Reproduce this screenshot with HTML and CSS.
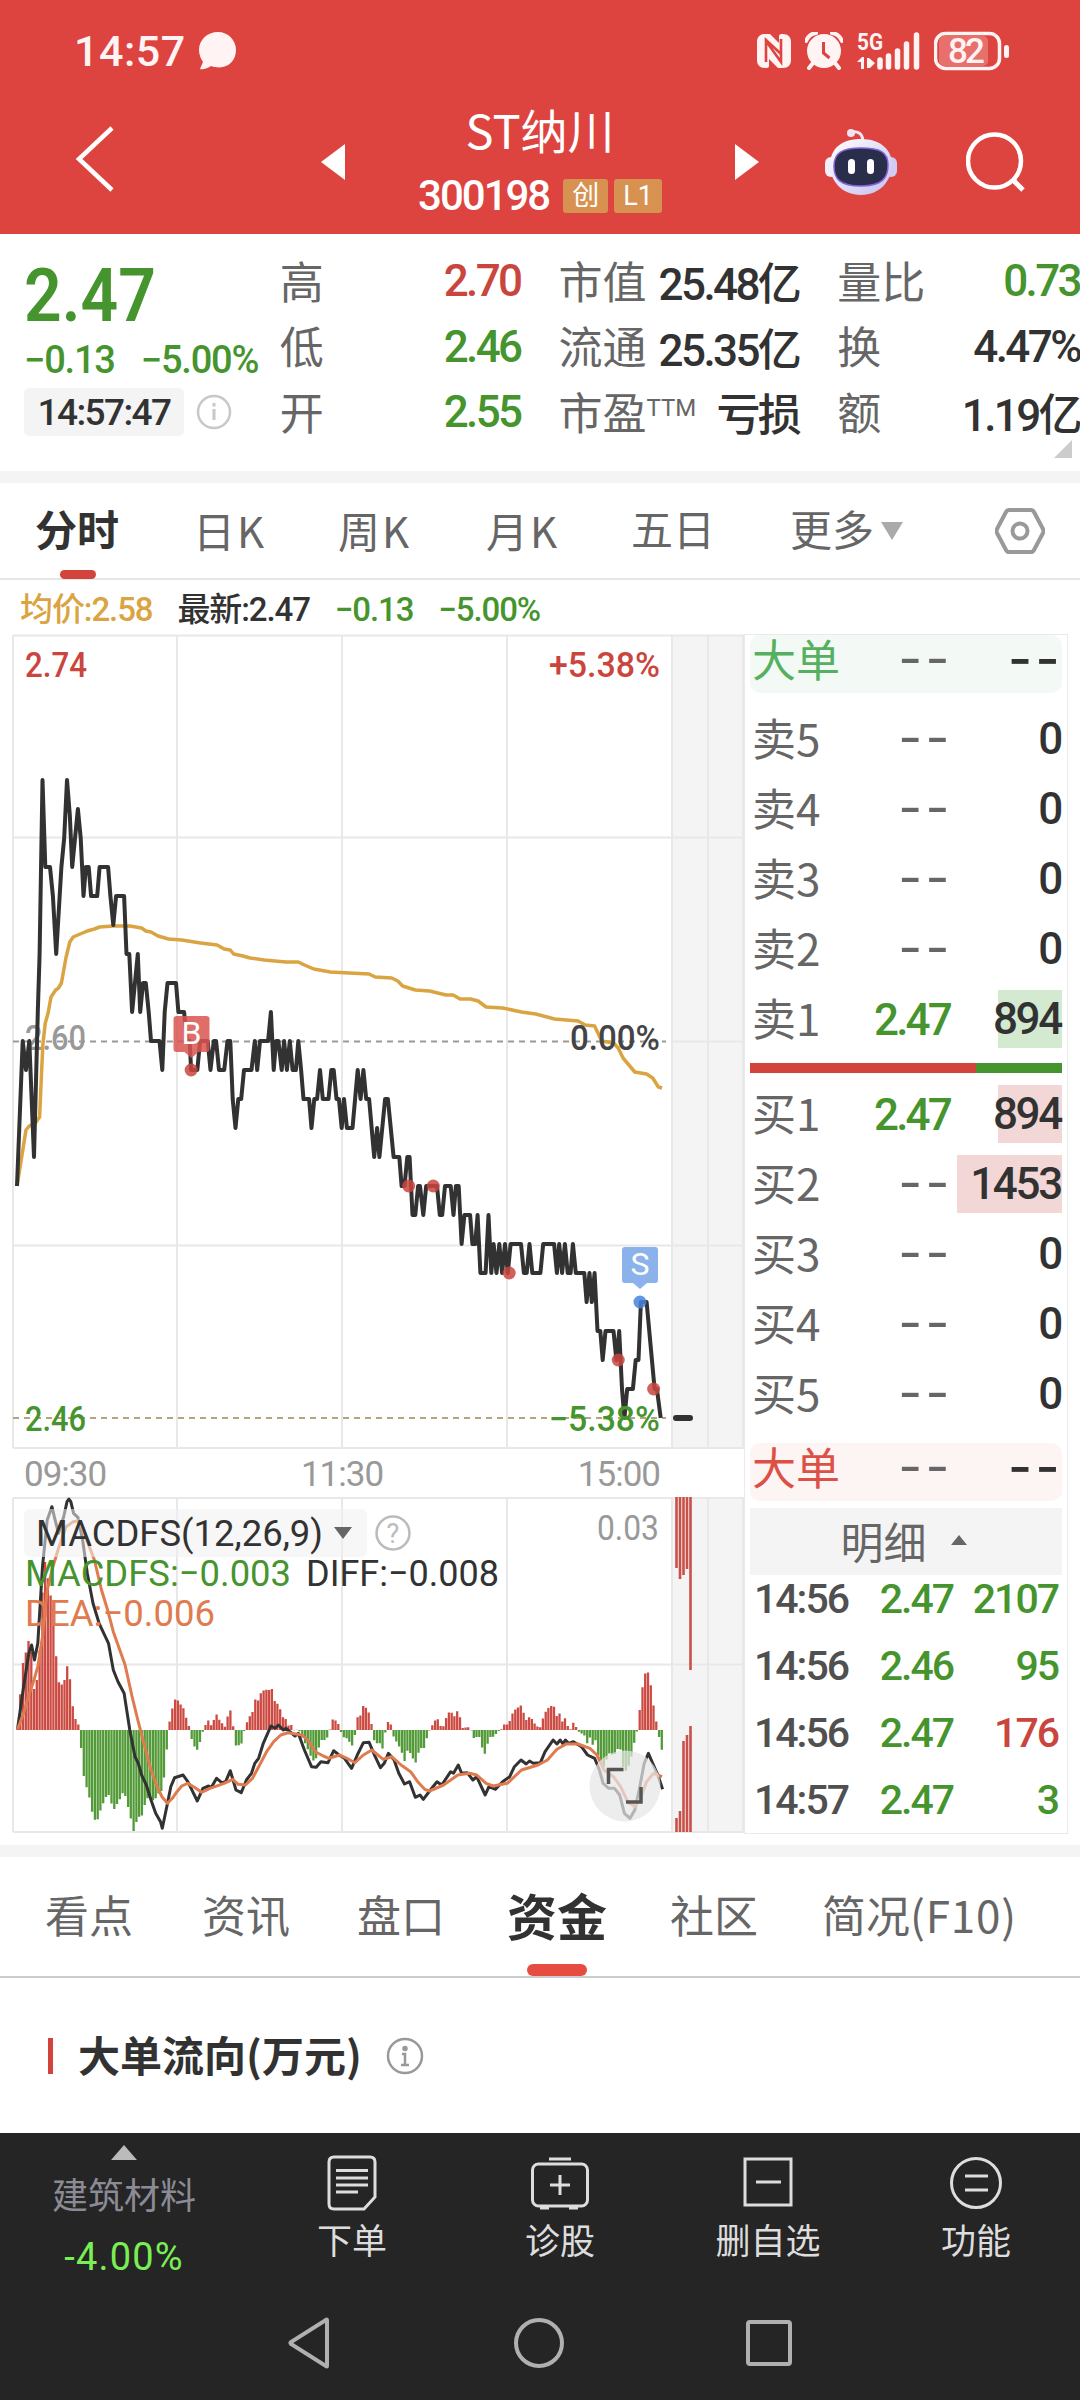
FILE: index.html
```html
<!DOCTYPE html>
<html lang="zh-CN">

<head>
  <meta charset="UTF-8" />
  <title>ST纳川 300198</title>
  <meta name="viewport" content="width=device-width, initial-scale=1.0" />
  <link rel="stylesheet" href="styles.css">
</head>

<body>
  <header>
    <div class="status-bar">
      <span class="clock">14:57</span>
      <svg class="bubble" width="39" height="40" viewBox="0 0 39 40"><path d="M20 1C9 1 1 9 1 19c0 5 2 9 4 12l-3 7c3 1 8-1 11-3 15 5 25-4 25-16C38 9 30 1 20 1z" fill="#fff3f3"/></svg>
      <div class="status-icons">
        <svg width="34" height="36" viewBox="0 0 34 36">
          <path d="M8 1h5l9 9V3c0-1 1-2 2-2h2c5 0 8 3 8 8v18c0 5-3 8-8 8h-5l-9-9v7c0 1-1 2-2 2H8c-5 0-8-3-8-8V9c0-5 3-8 8-8z" fill="#fff3f3"/>
          <path d="M9 29V7l15 14V6M9 8l15 21V14" fill="none" stroke="#dd443f" stroke-width="2.6"/>
        </svg>
        <svg width="38" height="38" viewBox="0 0 38 38">
          <path d="M1 9Q4 2 11 1M37 9Q34 2 27 1M8 31l-4 5M30 31l4 5" fill="none" stroke="#fff3f3" stroke-width="4" stroke-linecap="round"/>
          <circle cx="19" cy="19" r="17" fill="#fff3f3"/>
          <path d="M18.500 10v11l6 5" fill="none" stroke="#dd443f" stroke-width="3"/>
        </svg>
        <svg width="63" height="56" viewBox="0 -8 63 56">
          <text class="net" x="0" y="19" textLength="26" lengthAdjust="spacingAndGlyphs">5G</text>
          <path d="M0 31l5-5h2v12H4v-7zM10 27h2l6 5-5 5h-3z" fill="#fff3f3"/>
          <path d="M23 29v7M31.500 25v11M40.500 20v16M49.500 13v23M59.500 4v32" stroke="#fff3f3" stroke-width="5.500" stroke-linecap="round"/>
        </svg>
        <svg width="76" height="40" viewBox="0 0 76 40">
          <rect x="5" y="5" width="49" height="30" rx="5" fill="#e8706c"/>
          <rect x="1.500" y="2.500" width="64" height="35" rx="10" fill="none" stroke="#fff3f3" stroke-width="3.500"/>
          <rect x="70" y="14" width="5" height="13" rx="2.500" fill="#fff3f3"/>
          <text class="battery" x="14" y="32" textLength="37">82</text>
        </svg>
      </div>
    </div>

    <div class="title-bar">
      <svg class="back" width="40" height="66" viewBox="0 0 40 66"><path d="M37 2L4 33l33 31" fill="none" stroke="#fff" stroke-width="4.500"/></svg>
      <svg width="24" height="36" viewBox="0 0 24 36"><path d="M24 0v36L0 18z" fill="#fff"/></svg>
      <div class="stock">
        <h1>ST纳川</h1>
        <div class="code"><span>300198</span><em>创</em><em>L1</em></div>
      </div>
      <svg width="24" height="36" viewBox="0 0 24 36"><path d="M0 0v36l24-18z" fill="#fff"/></svg>
      <svg class="robot" width="72" height="68" viewBox="0 0 72 68">
        <defs>
          <linearGradient id="shell" x1="0" y1="0" x2="1" y2="1"><stop offset="0" stop-color="#fff"/><stop offset="1" stop-color="#c4bff0"/></linearGradient>
        </defs>
        <path d="M26 4q11-2 12 9" fill="none" stroke="#f3e6f2" stroke-width="3"/>
        <circle cx="26" cy="5" r="4" fill="#efe4f2"/>
        <rect x="0" y="29" width="12" height="20" rx="6" fill="#f3effa"/>
        <rect x="60" y="29" width="12" height="20" rx="6" fill="#d0ccf4"/>
        <path d="M36 11c20 0 31 11 31 26S55 67 36 67 5 53 5 37 16 11 36 11z" fill="url(#shell)"/>
        <path d="M36 20c19 0 27 4 27 17S57 58 36 58 9 51 9 38s8-18 27-18z" fill="#292e4b" stroke="#8461d9" stroke-width="1.500"/>
        <rect x="23" y="31" width="7" height="15" rx="3.500" fill="#fff"/>
        <rect x="42" y="31" width="7" height="15" rx="3.500" fill="#fff"/>
      </svg>
      <svg class="search" width="60" height="60" viewBox="0 0 60 60"><circle cx="28.500" cy="29" r="26.500" fill="none" stroke="#fff" stroke-width="4.500"/><path d="M46 47l11 11" stroke="#fff" stroke-width="5"/></svg>
    </div>
  </header>

  <section class="quote">
    <div class="quote-price">
      <div class="last">2.47</div>
      <div class="change"><span>−0.13</span><span>−5.00%</span></div>
      <div class="time">
        <span class="chip">14:57:47</span>
        <svg width="36" height="36" viewBox="0 0 36 36" fill="none" stroke="#c8c8c8" stroke-width="2.500"><circle cx="18" cy="18" r="16"/><path d="M18 15v11M18 9v3.500" stroke-width="3"/></svg>
      </div>
    </div>
    <dl>
      <div><dt>高</dt><dd class="red">2.70</dd></div>
      <div><dt>低</dt><dd class="green">2.46</dd></div>
      <div><dt>开</dt><dd class="green">2.55</dd></div>
    </dl>
    <dl>
      <div><dt>市值</dt><dd>25.48亿</dd></div>
      <div><dt>流通</dt><dd>25.35亿</dd></div>
      <div><dt>市盈<sup>TTM</sup></dt><dd>亏损</dd></div>
    </dl>
    <dl>
      <div><dt>量比</dt><dd class="green">0.73</dd></div>
      <div><dt>换</dt><dd>4.47%</dd></div>
      <div><dt>额</dt><dd>1.19亿</dd></div>
    </dl>
    <i class="corner"></i>
  </section>

  <nav class="period-tabs">
    <a class="active">分时</a>
    <a>日<b>K</b></a>
    <a>周<b>K</b></a>
    <a>月<b>K</b></a>
    <a>五日</a>
    <a>更多<i class="caret"></i></a>
    <svg width="50" height="46" viewBox="0 0 50 46" fill="none" stroke="#999" stroke-width="4"><path d="M14 2h22q2 0 3 2l9 17q1 2 0 4l-9 17q-1 2-3 2H14q-2 0-3-2L2 25q-1-2 0-4l9-17q1-2 3-2z"/><circle cx="25" cy="23" r="7.500"/></svg>
  </nav>

  <div class="legend">
    <span class="gold">均价:2.58</span>
    <span>最新:2.47</span>
    <span class="green">−0.13</span>
    <span class="green">−5.00%</span>
  </div>

  <main>
    <div class="charts">
      <svg id="priceChart" width="744" height="816" viewBox="0 0 744 816"></svg>
      <div class="time-axis"><span>09:30</span><span>11:30</span><span>15:00</span></div>
      <svg id="macdChart" width="744" height="337" viewBox="0 0 744 337"></svg>
    </div>

    <aside class="book">
      <div class="row big sell"><span>大单</span><span class="dash">--</span><span class="dash dark">--</span></div>
      <div class="levels">
        <div class="row"><span>卖5</span><span class="dash">--</span><span class="qty">0</span></div>
        <div class="row"><span>卖4</span><span class="dash">--</span><span class="qty">0</span></div>
        <div class="row"><span>卖3</span><span class="dash">--</span><span class="qty">0</span></div>
        <div class="row"><span>卖2</span><span class="dash">--</span><span class="qty">0</span></div>
        <div class="row"><span>卖1</span><span class="price">2.47</span><span class="qty"><i class="depth ask" style="width:64px"></i>894</span></div>
      </div>
      <div class="ratio"><i style="width:72.4%"></i></div>
      <div class="levels">
        <div class="row"><span>买1</span><span class="price">2.47</span><span class="qty"><i class="depth bid" style="width:64px"></i>894</span></div>
        <div class="row"><span>买2</span><span class="dash">--</span><span class="qty"><i class="depth bid" style="width:105px"></i>1453</span></div>
        <div class="row"><span>买3</span><span class="dash">--</span><span class="qty">0</span></div>
        <div class="row"><span>买4</span><span class="dash">--</span><span class="qty">0</span></div>
        <div class="row"><span>买5</span><span class="dash">--</span><span class="qty">0</span></div>
      </div>
      <div class="row big buy"><span>大单</span><span class="dash">--</span><span class="dash dark">--</span></div>
      <div class="detail-head">明细<i></i></div>
      <div class="ticks">
        <div class="tick"><span>14:56</span><span class="green">2.47</span><span class="green">2107</span></div>
        <div class="tick"><span>14:56</span><span class="green">2.46</span><span class="green">95</span></div>
        <div class="tick"><span>14:56</span><span class="green">2.47</span><span class="red">176</span></div>
        <div class="tick"><span>14:57</span><span class="green">2.47</span><span class="green">3</span></div>
      </div>
    </aside>
  </main>

  <nav class="info-tabs">
    <a>看点</a>
    <a>资讯</a>
    <a>盘口</a>
    <a class="active">资金</a>
    <a>社区</a>
    <a>简况<b>(F10)</b></a>
  </nav>

  <section class="flow">
    <h2>大单流向(万元)</h2>
    <svg width="38" height="38" viewBox="0 0 38 38" fill="none" stroke="#999" stroke-width="2.500"><circle cx="19" cy="19" r="17"/><path d="M16 17h3v11M15 28h8"/><circle cx="19" cy="11.500" r="1.500" fill="#999"/></svg>
  </section>

  <footer>
    <div class="toolbar">
      <div class="sector">
        <i></i>
        <span>建筑材料</span>
        <strong>-4.00%</strong>
      </div>
      <a>
        <svg width="50" height="56" viewBox="0 0 50 56"><path d="M7 2h36q5 0 5 5v35L37 54H7q-5 0-5-5V7q0-5 5-5zM9 15.500h32M9 23h32M9 30h32M9 37h22"/></svg>
        <span>下单</span>
      </a>
      <a>
        <svg width="58" height="56" viewBox="0 0 58 56"><rect x="1.500" y="9" width="55" height="42" rx="6"/><path d="M18 4h22M29 20v20M19 30h20M9 53h9M38 53h9"/></svg>
        <span>诊股</span>
      </a>
      <a>
        <svg width="50" height="56" viewBox="0 0 50 56"><rect x="2" y="4" width="46" height="46"/><path d="M13 27h25"/></svg>
        <span>删自选</span>
      </a>
      <a>
        <svg width="52" height="56" viewBox="0 0 52 56"><circle cx="26" cy="28" r="24.500"/><path d="M15 21h23M15 35h23"/></svg>
        <span>功能</span>
      </a>
    </div>
    <div class="system-nav">
      <svg width="46" height="52" viewBox="0 0 46 52"><path d="M40 3v46q0 1-1 0L4 27q-1-1 0-2L39 3q1-1 1 0z"/></svg>
      <svg width="52" height="52" viewBox="0 0 52 52"><circle cx="26" cy="26" r="23"/></svg>
      <svg width="48" height="48" viewBox="0 0 48 48"><rect x="3" y="3" width="42" height="42" rx="2"/></svg>
    </div>
  </footer>

  <script src="charts.js"></script>
</body>

</html>
```

FILE: styles.css
```css
* {
  box-sizing: border-box;
  margin: 0;
  padding: 0;
}

body {
  width: 1080px;
  height: 2400px;
  overflow: hidden;
  font-family: Roboto, "Noto Sans CJK SC", sans-serif;
  background: #fff;
  color: #323232;
  white-space: nowrap;
}

svg {
  display: block;
  flex: none;
}

i, em {
  font-style: normal;
}

.green { color: #46942e; }
.red { color: #c9453d; }
.gold { color: #d9a441; }

/* header */

header {
  height: 234px;
  background: #dd443f;
  color: #fff;
}

.status-bar {
  height: 102px;
  padding: 0 70px 0 74px;
  display: flex;
  align-items: center;
}

.clock {
  width: 124px;
  font-size: 43px;
  font-weight: 500;
  letter-spacing: 0.5px;
  color: #fff3f3;
}

.status-icons {
  margin-left: auto;
  display: flex;
  align-items: center;
  gap: 14px;
}

.net {
  font-size: 24px;
  font-weight: 700;
  fill: #fff3f3;
}

.battery {
  font-size: 35px;
  font-weight: 500;
  fill: #fff3f3;
}

.title-bar {
  height: 132px;
  display: grid;
  grid-template-columns: 321px 24px 390px 24px 66px 72px 69px 60px;
  align-items: center;
  padding-bottom: 12px;
}

.back {
  margin: -6px 0 0 75px;
}

.robot {
  grid-column: 6;
}

.search {
  grid-column: 8;
}

.stock {
  height: 120px;
  display: flex;
  flex-direction: column;
  align-items: center;
}

.stock h1 {
  height: 60px;
  line-height: 54px;
  font-size: 47px;
  font-weight: 400;
  font-family: "Noto Sans CJK SC", sans-serif;
}

.code {
  height: 78px;
  display: flex;
  align-items: center;
  gap: 6px;
}

.code span {
  padding-top: 12px;
  font-size: 42px;
  font-weight: 500;
  letter-spacing: -2px;
  margin-right: 8px;
}

.code em {
  height: 34px;
  line-height: 34px;
  margin-top: 13px;
  padding: 0 9px;
  border-radius: 3px;
  background: #d79252;
  font-size: 27px;
}

/* quote block */

.quote {
  position: relative;
  height: 249px;
  padding: 13px 0 0 24px;
  display: flex;
  border-bottom: 12px solid #f4f4f4;
}

.quote-price {
  width: 256px;
  color: #46942e;
}

.last {
  height: 92px;
  line-height: 96px;
  font-size: 75px;
  font-weight: 600;
  transform: scaleX(0.88);
  transform-origin: left;
}

.change {
  height: 40px;
  line-height: 42px;
  font-size: 38px;
  font-weight: 500;
  letter-spacing: -1.2px;
  display: flex;
  gap: 26px;
}

.time {
  margin-top: 9px;
  display: flex;
  align-items: center;
  gap: 12px;
}

.chip {
  width: 160px;
  height: 48px;
  line-height: 49px;
  border-radius: 6px;
  background: #f4f4f4;
  color: #323232;
  text-align: center;
  font-size: 37px;
  font-weight: 500;
  letter-spacing: -1.6px;
}

.quote dl {
  width: 241px;
  margin-right: 38px;
}

.quote dl:last-of-type {
  width: 243px;
  margin: 0;
}

.quote dl div {
  height: 65.5px;
  display: flex;
  justify-content: space-between;
  align-items: center;
}

.quote dt {
  font-size: 44px;
  color: #666;
}

.quote dd {
  padding-top: 3px;
  font-size: 44px;
  font-weight: 500;
  letter-spacing: -2.6px;
}

.quote sup {
  font-size: 24px;
  vertical-align: 14px;
  line-height: 0;
}

.corner {
  position: absolute;
  right: 8px;
  bottom: 13px;
  border-left: 18px solid transparent;
  border-bottom: 18px solid #ccc;
}

/* period tabs */

.period-tabs {
  height: 97px;
  padding-left: 35px;
  display: grid;
  grid-template-columns: 158px 145px 148px 145px 159px 205px 50px;
  align-items: center;
  border-bottom: 2px solid #e6e6e6;
  font-size: 42px;
  color: #666;
}

.period-tabs a {
  position: relative;
  line-height: 94px;
}

.period-tabs svg {
  margin-top: -3px;
}

.period-tabs b {
  margin-left: 2px;
  font-weight: 400;
  font-family: "Noto Sans CJK SC", sans-serif;
}

.period-tabs .active {
  color: #323232;
  font-weight: 700;
}

.period-tabs .active::after {
  content: "";
  position: absolute;
  left: 25px;
  bottom: 0;
  width: 36px;
  height: 9px;
  border-radius: 5px;
  background: #d2433b;
}

.caret {
  display: inline-block;
  margin-left: 7px;
  vertical-align: 6px;
  border: 11px solid transparent;
  border-top: 18px solid #aaa;
  border-bottom: 0;
}

.legend {
  height: 54px;
  padding: 3px 0 0 20px;
  display: flex;
  align-items: baseline;
  gap: 25px;
  font-size: 33px;
  font-weight: 500;
  letter-spacing: -1.1px;
}

/* charts and order book */

main {
  height: 1223px;
  display: flex;
  border-bottom: 12px solid #f4f4f4;
}

.charts {
  width: 744px;
}

.time-axis {
  height: 47px;
  width: 660px;
  padding: 2px 0 0 24px;
  display: flex;
  justify-content: space-between;
  align-items: center;
  font-size: 35px;
  letter-spacing: -1px;
  color: #999;
}

.grid { stroke: #e8e8e8; stroke-width: 2; fill: none; }
.after { fill: #f4f4f4; }
.price-line { stroke: #323232; stroke-width: 4; fill: none; stroke-linejoin: round; }
.avg-line { stroke: #d9a441; stroke-width: 3.5; fill: none; stroke-linejoin: round; }
.diff-line { stroke: #323232; stroke-width: 3; fill: none; stroke-linejoin: round; }
.dea-line { stroke: #e07b50; stroke-width: 3; fill: none; stroke-linejoin: round; }
.label { font-size: 35px; font-weight: 500; }
.light { font-weight: 400; }
.macd-label { font-size: 37px; }

.book {
  width: 324px;
  height: 1200px;
  padding: 0 5px;
  border: 1px solid #eaeaea;
}

.row {
  display: grid;
  grid-template-columns: 90px 109px 113px;
  align-items: center;
  height: 70px;
  padding-left: 2px;
  font-size: 44px;
  font-family: "Noto Sans CJK SC", sans-serif;
  color: #666;
}

.row span:first-child {
  line-height: 60px;
  padding-bottom: 5px;
}

.row span + span {
  margin-left: -3px;
  text-align: right;
  font-family: Roboto, sans-serif;
  font-weight: 500;
}

.row .dash {
  font-family: Inter, sans-serif;
  font-weight: 400;
  font-size: 52px;
  line-height: 60px;
  padding-bottom: 3px;
  letter-spacing: 3.5px;
  margin-right: -2px;
}

.row .dash.dark {
  color: #323232;
  font-weight: 500;
  padding-right: 3px;
}

.row .price {
  padding-right: 1px;
  font-size: 44px;
  letter-spacing: -2.8px;
  color: #46942e;
}

.row .qty {
  position: relative;
  align-self: stretch;
  left: -2px;
  padding-right: 1px;
  line-height: 73px;
  font-size: 44px;
  letter-spacing: -2.3px;
  color: #323232;
}

.depth {
  position: absolute;
  right: 0;
  top: 7px;
  height: 58px;
  z-index: -1;
}

.ask { background: #d3ead1; }
.bid { background: #f3d7d7; }

/* the text sits a little above the middle of these two bands */
.big {
  height: 58px;
  grid-template-rows: 50px;
  border-radius: 10px;
}

.sell { background: #f3faf6; color: #55b060; margin-bottom: 10px; }
.buy { background: #fdf4f4; color: #dc5045; margin-top: 15px; }
.big .dash { color: #666; }

.ratio {
  height: 10px;
  margin: 10px 0 5px;
  background: #46942e;
}

.ratio i {
  display: block;
  height: 10px;
  background: #d2433b;
}

.detail-head {
  height: 67px;
  margin-top: 7px;
  padding: 0 5px 3px 0;
  display: flex;
  justify-content: center;
  align-items: center;
  gap: 24px;
  background: #f4f4f4;
  font-size: 43px;
  color: #666;
}

.detail-head i {
  border: 8px solid transparent;
  border-bottom: 10px solid #666;
  border-top: 0;
}

.tick {
  display: grid;
  grid-template-columns: 100px 99px 105px;
  height: 44px;
  margin-bottom: 23px;
  padding-left: 4px;
  line-height: 49px;
  font-size: 41px;
  font-weight: 500;
  letter-spacing: -2px;
  color: #505050;
}

.tick span + span {
  text-align: right;
}

/* info tabs */

.info-tabs {
  height: 121px;
  padding-left: 45px;
  display: grid;
  grid-template-columns: 157px 155px 150px 163px 152px auto;
  border-bottom: 2px solid #ccc;
  line-height: 114px;
  font-size: 44px;
  font-family: "Noto Sans CJK SC", sans-serif;
  color: #666;
}

.info-tabs b {
  font-weight: 400;
  letter-spacing: 0.8px;
}

.info-tabs .active {
  position: relative;
  color: #323232;
  font-size: 50px;
  font-weight: 700;
}

.info-tabs .active::after {
  content: "";
  position: absolute;
  left: 20px;
  bottom: 0;
  width: 60px;
  height: 12px;
  border-radius: 6px;
  background: #e64c40;
}

.flow {
  height: 155px;
  padding-left: 48px;
  display: flex;
  align-items: center;
  gap: 24px;
}

.flow h2 {
  height: 36px;
  line-height: 31px;
  padding-left: 25px;
  border-left: 5px solid #d2433b;
  font-size: 42px;
  font-weight: 700;
  font-family: "Noto Sans CJK SC", sans-serif;
}

/* bottom toolbar */

footer {
  height: 267px;
  background: #252525;
}

.toolbar {
  height: 160px;
  display: grid;
  grid-template-columns: 248px repeat(4, 208px);
  color: #ddd;
  font-size: 35px;
  text-align: center;
}

.toolbar a {
  padding-top: 22px;
  display: flex;
  flex-direction: column;
  align-items: center;
}

.toolbar span {
  line-height: 63px;
}

.toolbar svg {
  fill: none;
  stroke: #ddd;
  stroke-width: 3;
}

.sector {
  display: flex;
  flex-direction: column;
  align-items: center;
  color: #8b8b96;
}

.sector i {
  margin-top: 12px;
  border: 13px solid transparent;
  border-top: 0;
  border-bottom: 15px solid #bbb;
}

.sector span {
  margin-top: 6px;
  font-size: 36px;
}

.sector strong {
  line-height: 56px;
  font-size: 38px;
  font-weight: 400;
  letter-spacing: 1.2px;
  color: #7aef55;
}

.system-nav {
  height: 100px;
  padding: 0 287px;
  display: flex;
  justify-content: space-between;
  align-items: center;
}

.system-nav svg {
  fill: none;
  stroke: #b0b0b0;
  stroke-width: 4;
}
```

FILE: charts.js
```js
// x values in the series are in sample units, SX turns them into pixels
const SX = 740 / 1568;

// price line: sample, cents below 2.60
const price = "36,5 48,0 55,1 62,0 72,4 80,-1 84,-3 90,-9 96,-6 106,-6 112,-5 119,-3 130,-6 136,-7 142,-9 148,-7.8 153,-6 165,-8 171,-7 177,-5 182,-6 188,-6 193,-5 206,-5 211,-6 229,-6 234,-5 240,-4 246,-5 263,-5 268,-3 274,-3 280,-1 292,-3 297,-1 303,-2 309,-2 315,-1 320,0 338,0 344,1 349,-1 355,-2 373,-2 378,-1 390,-1 396,0 402,0 405,1 418,1 424,0 440,0 446,1 453,0 458,0 464,1 475,1 482,0 488,0 493,2 499,3 505,2 511,2 517,1 533,1 540,0 545,1 551,0 568,0 574,-1 580,1 585,0 590,0 597,1 602,0 608,1 614,0 620,1 627,1 632,0 638,1 643,2 655,2 660,3 666,2 672,2 678,1 684,2 696,2 702,1 707,1 713,2 718,2 724,3 729,2 735,3 747,3 758,1 764,2 770,1 776,2 782,2 793,4 799,3 804,4 816,2 822,2 834,4 846,4 851,5 857,5 863,4 868,4 874,6 880,6 886,5 890,5 897,6 903,5 926,5 932,6 937,6 943,5 955,5 961,6 966,5 972,5 978,7 984,6 996,6 1001,7 1007,7 1012,6 1018,8 1029,8 1035,6 1041,8 1046,7 1052,8 1058,7 1064,8 1070,7 1076,8 1082,7 1104,7 1110,8 1116,8 1122,7 1128,8 1145,8 1151,7 1174,7 1180,8 1185,7 1191,8 1197,7 1203,8 1209,8 1214,7 1220,8 1238,8 1243,9 1249,8 1254,9 1260,8 1266,10 1272,10 1277,11 1283,10 1300,10 1306,11 1312,10 1318,12 1323,13 1329,12 1341,12 1347,11 1353,11 1358,9 1370,9 1387,12 1392,12 1400,13";

const average = "36,552 46,523 55,496 62,492 75,489 84,483 88,440 91,410 96,389 102,379 108,363 118,356 124,354 130,349 140,323 148,308 155,303 170,300 185,297 200,295 211,293 240,292 275,292 300,294 309,297 320,298 335,302 357,305 385,306 425,309 460,311 475,315 488,316 495,320 515,322 530,324 560,326 605,328 632,328 645,331 655,333 665,335 700,338 740,339 782,340 795,343 830,344 843,347 853,352 880,356 910,357 945,361 960,361 975,365 997,365 1013,367 1030,373 1065,374 1105,378 1135,380 1175,385 1225,387 1240,391 1260,392 1275,407 1300,409 1310,414 1320,424 1345,438 1370,440 1383,444 1395,453 1403,454";

// MACD series, three units per pixel
const bars = "37,745 43,640 49,545 55,515 61,480 67,520 72,628 78,600 84,510 90,330 96,240 102,300 107,345 113,380 119,528 125,608 130,615 136,605 142,557 147,577 153,670 159,715 165,725 170,773 176,878 182,915 188,942 194,990 200,1017 205,1027 211,998 217,975 223,955 229,940 234,957 240,993 246,977 252,963 258,945 263,930 269,973 275,992 281,1055 286,1050 292,1002 298,1020 304,990 310,955 320,955 327,965 333,945 339,935 345,930 350,857 356,773 360,714 367,675 373,651 379,667 390,687 396,722 402,744 407,783 413,803 419,811 425,780 430,753 436,733 442,720 448,738 454,717 459,703 465,720 477,741 482,711 488,690 494,738 500,797 511,795 517,755 523,728 529,709 535,697 540,657 546,665 552,641 558,632 564,629 570,632 574,608 580,661 586,668 592,678 598,712 604,710 610,740 615,726 621,750 627,752 632,744 638,765 650,800 662,840 668,845 674,812 680,780 690,780 697,765 701,735 707,710 713,728 719,735 725,770 735,775 746,797 752,765 758,710 764,706 770,675 776,684 782,700 788,738 794,790 805,790 808,818 812,798 817,752 823,722 829,735 834,770 845,797 852,820 857,845 863,812 870,820 880,852 886,820 892,803 897,811 903,780 909,755 915,738 926,711 932,735 938,745 944,718 950,700 955,690 961,714 967,697 972,687 978,744 996,741 1001,765 1007,783 1013,757 1024,816 1030,825 1036,762 1042,780 1048,760 1054,765 1059,742 1065,752 1070,724 1076,738 1088,693 1094,686 1105,675 1111,707 1117,725 1123,706 1130,726 1140,742 1146,742 1151,712 1157,693 1163,682 1169,677 1175,681 1180,710 1186,700 1192,727 1198,713 1204,742 1209,748 1215,728 1221,742 1227,756 1238,765 1244,790 1250,772 1256,795 1261,775 1268,830 1278,865 1290,820 1301,827 1313,795 1320,860 1325,875 1335,850 1345,780 1352,742 1358,653 1364,597 1370,567 1376,588 1381,635 1387,700 1393,740 1399,793 1405,822";

const diff = "37,748 50,620 61,520 67,495 73,540 80,490 90,260 100,120 110,80 116,115 124,160 135,110 142,65 146,57 150,65 156,100 165,112 175,180 185,280 197,370 210,430 230,490 240,570 250,605 263,640 275,750 286,830 293,850 300,885 310,915 320,960 330,1000 340,1025 344,1045 355,970 362,920 370,893 388,885 398,905 405,925 418,963 430,925 442,918 448,922 459,895 470,908 478,905 488,872 500,930 511,938 522,900 533,880 540,850 548,835 558,790 574,738 583,745 590,735 600,750 606,745 625,768 632,760 645,810 660,860 670,862 680,845 695,848 707,812 718,825 730,835 745,865 757,825 770,788 782,787 795,830 806,863 814,850 823,820 835,840 845,880 857,912 868,905 880,952 890,945 897,958 912,930 926,905 936,915 955,875 961,880 971,855 978,880 990,878 1002,900 1010,890 1028,945 1036,920 1050,928 1065,905 1080,890 1090,860 1104,840 1115,852 1122,843 1130,850 1145,848 1155,815 1172,780 1180,792 1187,780 1193,792 1198,780 1205,790 1215,785 1232,800 1245,825 1260,835 1270,870 1278,910 1290,925 1302,925 1313,945 1323,1000 1335,1015 1345,990 1355,925 1365,850 1374,820 1383,850 1394,885 1404,928";

const dea = "37,748 50,700 60,650 72,600 80,560 90,470 100,330 112,260 125,200 140,140 155,125 168,122 180,165 200,240 215,330 228,390 240,455 265,555 280,650 292,720 305,790 318,860 330,910 343,950 355,970 365,955 375,935 385,918 398,910 415,925 427,937 445,925 475,910 493,898 505,913 520,915 535,895 550,855 565,815 580,785 595,765 610,758 640,765 655,785 668,815 685,828 697,835 720,825 735,835 752,848 770,825 788,810 812,838 830,830 850,855 870,875 885,905 900,928 910,933 940,915 970,885 995,880 1010,885 1030,910 1045,918 1075,910 1105,870 1140,855 1160,840 1180,808 1200,792 1225,792 1250,805 1265,825 1280,870 1300,890 1315,920 1330,965 1345,980 1358,950 1370,905 1385,880 1403,890";

const parse = (s) => s.split(" ").map((p) => p.split(",").map(Number));
const toPoints = (s, fy) => parse(s).map(([x, y]) => `${(x * SX).toFixed(1)},${fy(y).toFixed(1)}`).join(" ");

const priceY = (k) => 407 + 29 * k;
const macdY = (v) => v / 3 - 17;

function text(str, x, y, width, fill, cls = "label") {
  return `<text class="${cls}" x="${x}" y="${y}" fill="${fill}" textLength="${width}" lengthAdjust="spacingAndGlyphs">${str}</text>`;
}

function dot(x, k, fill) {
  return `<circle cx="${x * SX}" cy="${priceY(k)}" r="6.500" fill="${fill}" fill-opacity=".85"/>`;
}

function flag(str, x, y, fill) {
  return `<path d="M${x - 15} ${y}h30q3 0 3 3v30q0 3-3 3h-8l-7 6-7-6h-8q-3 0-3-3v-30q0-3 3-3z" fill="${fill}" fill-opacity=".85"/>
    <text x="${x}" y="${y + 28}" fill="#fff" font-size="32" text-anchor="middle">${str}</text>`;
}

function drawPrice() {
  const red = "#c9453d", green = "#46942e";
  document.getElementById("priceChart").innerHTML = `
    <rect class="after" x="671" y="1" width="73" height="813"/>
    <path class="grid" d="M13 1.500H744M13 203.500H744M13 611.500H744M13 814H744M671 407.500H744M13 1V814M177 1V814M342 1V814M507 1V814M672 1V814M708 1V814M743 1V814"/>
    <path d="M13 407.500H666" stroke="#999" stroke-width="2" stroke-dasharray="6 5"/>
    <path d="M13 784H666" stroke="#b5a57c" stroke-width="2" stroke-dasharray="6 5"/>
    ${text("2.60", 25, 416, 61, "#999")}
    <polyline class="avg-line" points="${toPoints(average, (y) => y)}"/>
    <polyline class="price-line" points="${toPoints(price, priceY)}"/>
    ${text("2.74", 25, 43, 62, red)}
    ${text("+5.38%", 549, 43, 111, red)}
    ${text("0.00%", 570, 416, 90, "#444")}
    ${text("2.46", 25, 797, 61, green)}
    ${text("−5.38%", 549, 797, 111, green)}
    ${dot(405, 1, red)}${dot(866, 5, red)}${dot(918, 5, red)}${dot(1079, 8, red)}
    ${dot(1310, 11, red)}${dot(1385, 12, red)}${dot(1356, 9, "#4585dd")}
    ${flag("B", 191.500, 382, "#d95550")}
    ${flag("S", 640, 613, "#77a5e8")}
    <path d="M676 784h14" stroke="#323232" stroke-width="6" stroke-linecap="round"/>`;
}

function drawMacd() {
  const pts = parse(bars);
  let red = "", green = "";
  for (let x = 37; x < 1406; x += 5.86) {
    const i = Math.max(1, pts.findIndex((p) => p[0] >= x));
    const [x0, y0] = pts[i - 1], [x1, y1] = pts[i];
    const y = y0 + (y1 - y0) * (x - x0) / (x1 - x0);
    const d = `M${(x * SX).toFixed(1)} 233V${macdY(y).toFixed(1)}`;
    if (y < 750) red += d; else green += d;
  }
  document.getElementById("macdChart").innerHTML = `
    <rect class="after" x="671" y="1" width="73" height="334"/>
    <path class="grid" d="M13 1H744M13 167.500H744M13 335H744M13 1V335M177 1V335M342 1V335M507 1V335M672 1V335M708 1V335M743 1V335"/>
    <path d="${red}" stroke="#cb4a42" stroke-width="2.300"/>
    <path d="${green}" stroke="#529a37" stroke-width="2.300"/>
    <path d="M676.500 0V71M680 0V82M683.500 0V78M687 0V72M690.500 0V173M676.500 335V321M680 335V314M683.500 335V244M687 335V238M690.500 335V229" stroke="#c9514a" stroke-width="2.600"/>
    <polyline class="diff-line" points="${toPoints(diff, macdY)}"/>
    <polyline class="dea-line" points="${toPoints(dea, macdY)}"/>
    <rect x="24" y="12" width="343" height="48" rx="6" fill="#f0f0f0" fill-opacity=".55"/>
    ${text("MACDFS(12,26,9)", 36, 49, 287, "#323232", "macd-label")}
    <path d="M334 30h18l-9 12z" fill="#666"/>
    <circle cx="393" cy="36" r="16.500" fill="none" stroke="#bbb" stroke-width="2.500"/>
    <text x="393" y="46" font-size="27" fill="#bbb" text-anchor="middle">?</text>
    ${text("0.03", 597, 43, 62, "#999", "label light")}
    ${text("MACDFS:−0.003", 25, 89, 266, "#46942e", "macd-label")}
    ${text("DIFF:−0.008", 306, 89, 193, "#323232", "macd-label")}
    ${text("DEA:−0.006", 25, 129, 190, "#e07b50", "macd-label")}
    <circle cx="625" cy="289" r="35.500" fill="#e6e6e6" fill-opacity=".72"/>
    <path d="M608.500 287v-14.500h15M641 290v15h-15" fill="none" stroke="#555" stroke-width="3.500"/>`;
}

drawPrice();
drawMacd();
```
